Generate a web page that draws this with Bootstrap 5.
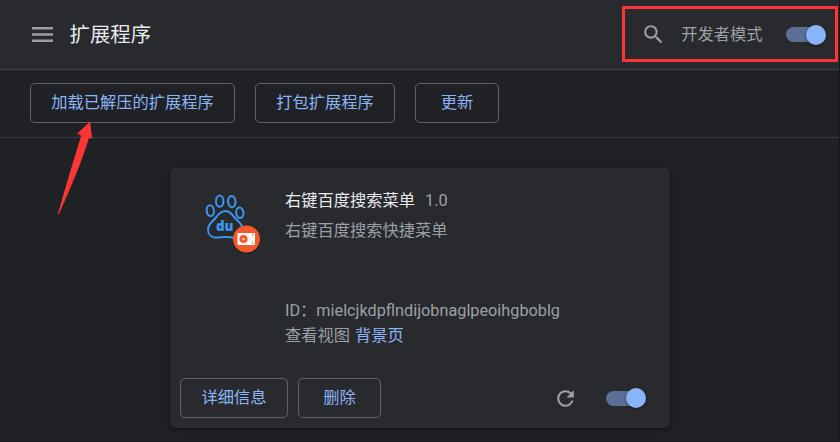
<!DOCTYPE html>
<html lang="zh-CN" data-bs-theme="dark">
<head>
<meta charset="utf-8">
<title>扩展程序</title>
<link href="https://cdn.jsdelivr.net/npm/bootstrap@5.3.0/dist/css/bootstrap.min.css" rel="stylesheet">
<style>
body{background:#202124;color:#9aa0a6;font:16.25px/25px Roboto,"Noto Sans CJK SC",sans-serif;width:840px;height:442px;overflow:hidden}
.topbar{height:70px;background:#292a2d;border-bottom:1px solid #3f4042;padding:0 14px 0 30px}
.page-title{font-size:20.4px;line-height:28px;color:#e8eaed;margin-left:14.5px}
.dev-mode{margin:0 23.500px 0 15px}
.toolbar{height:68px;border-bottom:1px solid #3c3d40;padding:13px 30px 0;gap:20px}
.btn-ext{--bs-btn-color:#8ab4f8;--bs-btn-border-color:#5f6368;--bs-btn-hover-color:#8ab4f8;--bs-btn-hover-border-color:#8ab4f8;--bs-btn-border-radius:5px;--bs-btn-font-size:16.25px;--bs-btn-padding-x:0;--bs-btn-padding-y:0;height:40px;line-height:36px;white-space:nowrap}
.btn-load{width:205px}
.btn-pack{width:140px}
.btn-update{width:84px}
.btn-details{width:108px}
.btn-remove{width:83px}
.ext-card{--bs-card-bg:#292a2d;--bs-card-border-width:0;--bs-card-border-radius:5px;--bs-card-color:#9aa0a6;width:500px;height:260px;margin:30px auto 0;box-shadow:0 1px 3px rgba(0,0,0,.4),0 2px 5px rgba(0,0,0,.2)}
.ext-main{padding:20px 20px 0 35px;height:200px}
.ext-icon{width:60px;height:60px;margin:5px 20px 0 0;overflow:visible;flex:none}
.ext-name{color:#e8eaed;font-weight:400}
.ext-version{margin-left:10px}
.ext-desc{margin-top:5px}
.ext-id{margin-top:55px}
.view-link{color:#8ab4f8;text-decoration:none;margin-left:1px}
.ext-actions{padding:10px 24px 10px 10px;gap:10px;height:60px}
.switch-track{width:40px;height:20px;flex:none}
.switch-track::before{content:"";position:absolute;left:0;top:2.500px;width:35px;height:15px;border-radius:8px;background:#5b6e95}
.switch-track::after{content:"";position:absolute;right:.4px;top:0;width:20px;height:20px;border-radius:50%;background:#8ab4f8;box-shadow:0 1px 3px rgba(0,0,0,.45)}
.reload{margin-right:18px}
.highlight{left:622px;top:6px;width:216px;height:56px;border:3px solid #ff3636}
.pointer{left:50px;top:115px}
.edge-line{right:0;top:0;width:1px;height:442px;background:#17181b}
.base-line{left:0;top:441px;width:840px;height:1px;background:#17161a}
</style>
<script src="https://cdn.jsdelivr.net/npm/bootstrap@5.3.0/dist/js/bootstrap.bundle.min.js"></script>
</head>
<body class="position-relative">
<header class="topbar d-flex align-items-center">
  <svg width="25" height="25" viewBox="0 0 25 25" fill="#9aa0a6"><path d="M2 5h21v2.500H2zM2 11.200h21v2.500H2zM2 17.500h21V20H2z"/></svg>
  <h1 class="page-title mb-0 fw-normal">扩展程序</h1>
  <svg class="ms-auto" width="25" height="25" viewBox="0 0 24 24" fill="#9aa0a6"><path d="M15.500 14h-.79l-.28-.27A6.470 6.470 0 0 0 16 9.500 6.500 6.500 0 1 0 9.500 16c1.610 0 3.090-.59 4.230-1.570l.27.28v.79l5 4.990L20.490 19zm-6 0C7.010 14 5 11.990 5 9.500S7.010 5 9.500 5 14 7.010 14 9.500 11.990 14 9.500 14z"/></svg>
  <span class="dev-mode">开发者模式</span>
  <span class="switch-track position-relative" role="switch" aria-checked="true"></span>
</header>
<div class="toolbar d-flex align-items-start">
  <button class="btn btn-ext btn-load">加载已解压的扩展程序</button>
  <button class="btn btn-ext btn-pack">打包扩展程序</button>
  <button class="btn btn-ext btn-update">更新</button>
</div>
<main class="card ext-card">
  <div class="ext-main d-flex align-items-start">
    <svg class="ext-icon" viewBox="205 193 60 60">
      <g fill="none" stroke="#3b97f5" stroke-width="2">
        <ellipse cx="210.300" cy="210.700" rx="3.600" ry="5.400" transform="rotate(-6 210.300 210.700)"/>
        <ellipse cx="219.700" cy="201.200" rx="3.700" ry="5.600"/>
        <ellipse cx="231.800" cy="201.600" rx="3.700" ry="5.600" transform="rotate(-5 231.800 201.600)"/>
        <ellipse cx="239.800" cy="212.700" rx="3.600" ry="5.300" transform="rotate(-8 239.800 212.700)"/>
        <path d="M225.500 211c-4.300 0-7 3-9.400 6.400-2.200 3.100-8.100 5.900-8.100 12.100 0 4.700 3.100 8.200 8.200 8.200 3.200 0 5.200-.8 9-.8 3.700 0 5.700.8 9 .8 5.100 0 8.500-3.400 8.500-8 0-6.300-5.700-9.100-8.200-12.200C232.200 214.300 229.800 211 225.500 211z"/>
      </g>
      <text x="216" y="231" fill="#3b97f5" font-family="Open Sans, sans-serif" font-weight="800" font-size="13.500" textLength="17.500" lengthAdjust="spacingAndGlyphs">du</text>
      <circle cx="246.700" cy="240" r="13.700" fill="#000" opacity=".3"/>
      <circle cx="246.500" cy="239" r="13.500" fill="#f4592b"/>
      <rect x="237.500" y="233" width="17.500" height="12" rx=".8" fill="#fff"/>
      <circle cx="243.500" cy="239" r="4.100" fill="#f4592b"/>
      <circle cx="243.500" cy="239" r="1.300" fill="#fff" opacity=".65"/>
      <circle cx="252.700" cy="235" r=".8" fill="#f4592b"/><circle cx="252.700" cy="243" r=".8" fill="#f4592b"/>
    </svg>
    <div>
      <div class="d-flex"><span class="ext-name">右键百度搜索菜单</span><span class="ext-version">1.0</span></div>
      <div class="ext-desc">右键百度搜索快捷菜单</div>
      <div class="ext-id">ID：mielcjkdpflndijobnaglpeoihgboblg</div>
      <div>查看视图 <a class="view-link" href="#">背景页</a></div>
    </div>
  </div>
  <div class="ext-actions d-flex align-items-center">
    <button class="btn btn-ext btn-details">详细信息</button>
    <button class="btn btn-ext btn-remove">删除</button>
    <svg class="ms-auto reload" width="25" height="25" viewBox="0 0 24 24" fill="#9aa0a6"><path d="M17.650 6.350A7.960 7.960 0 0 0 12 4a8 8 0 1 0 7.730 10h-2.080A6 6 0 1 1 12 6c1.660 0 3.140.69 4.220 1.780L13 11h7V4z"/></svg>
    <span class="switch-track position-relative" role="switch" aria-checked="true"></span>
  </div>
</main>
<div class="edge-line position-absolute"></div>
<div class="base-line position-absolute"></div>
<div class="highlight position-absolute pe-none"></div>
<svg class="pointer position-absolute pe-none" width="50" height="105" viewBox="50 115 50 105"><path d="M90 121.500L77.300 133.500l3.900 2.200C73 162 65 188 58 214l.8.600C70 189 81 164 89 138l3.200.6z" fill="#ff3636"/></svg>
</body>
</html>
